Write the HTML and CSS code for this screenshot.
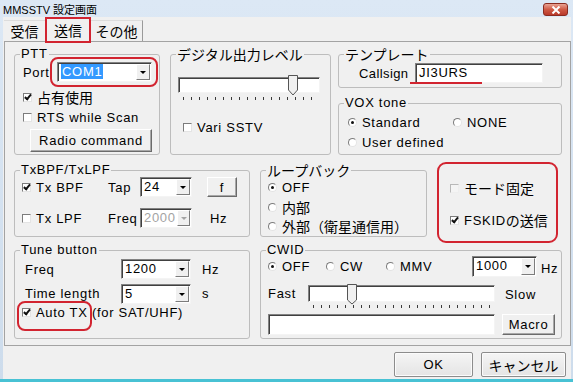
FILE: index.html
```html
<!DOCTYPE html>
<html>
<head>
  <meta charset="utf-8">
  <title>MMSSTV 設定画面</title>

  <!-- ESTILO -->
  <link rel="stylesheet" href="styles.css">
</head>
<body>
  <div class="window">
    <!-- BARRA DE TITULO -->
    <div class="titlebar">
      <span class="title">MMSSTV 設定画面</span>
      <span class="close-btn">
        <svg width="10" height="8" viewBox="0 0 10 8"><path d="M1.5 0.5 L8.5 7.5 M8.5 0.5 L1.5 7.5" stroke="#fff" stroke-width="2"/></svg>
      </span>
    </div>

    <div class="client">
      <!-- PESTAÑAS -->
      <div class="tabs">
        <div class="tab t1">受信</div>
        <div class="tab active">送信</div>
        <div class="tab t3">その他</div>
      </div>

      <div class="panel">
        <!-- FILA 1 -->
        <div class="row row1">
          <fieldset class="grp g-ptt">
            <legend>PTT</legend>
            <div class="body">
              <div class="line port-line">
                <span class="lbl-port">Port</span>
                <div class="combo c-port"><span class="val"><span class="sel">COM1</span></span><span class="drop"></span></div>
                <span class="mark mark-port"></span>
              </div>
              <div class="check first"><span class="box on"></span><span class="jp">占有使用</span></div>
              <div class="check"><span class="box"></span>RTS while Scan</div>
              <button class="btn btn-radio">Radio command</button>
            </div>
          </fieldset>

          <fieldset class="grp g-digi">
            <legend class="jp">デジタル出力レベル</legend>
            <div class="body">
              <div class="track t-digi">
                <svg class="thumb th-digi" width="10" height="21" viewBox="0 0 10 21"><polygon points="0.5,0.5 9.5,0.5 9.5,15 5,20 0.5,15" fill="#f0f0f0" stroke="#555"/></svg>
              </div>
              <div class="ticks tk-digi"></div>
              <div class="check vari"><span class="box"></span>Vari SSTV</div>
            </div>
          </fieldset>

          <div class="col-right">
            <fieldset class="grp g-tpl">
              <legend class="jp">テンプレート</legend>
              <div class="body">
                <div class="line call-line">
                  <span class="lbl-call">Callsign</span>
                  <div class="edit e-call">JI3URS</div>
                  <span class="mark mark-call"></span>
                </div>
              </div>
            </fieldset>
            <fieldset class="grp g-vox">
              <legend>VOX tone</legend>
              <div class="body vox-grid">
                <div class="opt"><span class="radio on"></span>Standard</div>
                <div class="opt"><span class="radio"></span>NONE</div>
                <div class="opt"><span class="radio"></span>User defined</div>
              </div>
            </fieldset>
          </div>
        </div>

        <!-- FILA 2 -->
        <div class="row row2">
          <fieldset class="grp g-bpf">
            <legend>TxBPF/TxLPF</legend>
            <div class="body bpf-grid">
              <div class="check"><span class="box on"></span>Tx BPF</div>
              <span>Tap</span>
              <div class="combo c-small"><span class="val">24</span><span class="drop"></span></div>
              <button class="btn btn-f">f</button>

              <div class="check"><span class="box"></span>Tx LPF</div>
              <span>Freq</span>
              <div class="combo c-small disabled"><span class="val">2000</span><span class="drop"></span></div>
              <span class="unit-hz">Hz</span>
            </div>
          </fieldset>

          <fieldset class="grp g-loop">
            <legend class="jp">ループバック</legend>
            <div class="body">
              <div class="opt r1"><span class="radio on"></span>OFF</div>
              <div class="opt r2"><span class="radio"></span><span class="jp">内部</span></div>
              <div class="opt r3"><span class="radio"></span><span class="jp">外部（衛星通信用）</span></div>
            </div>
          </fieldset>

          <div class="mode-box">
            <div class="check"><span class="box dis"></span><span class="jp">モード固定</span></div>
            <div class="check second"><span class="box on"></span>FSKID<span class="jp">の送信</span></div>
          </div>
        </div>

        <!-- FILA 3 -->
        <div class="row row3">
          <fieldset class="grp g-tune">
            <legend>Tune button</legend>
            <div class="body tune-grid">
              <span>Freq</span>
              <div class="combo c-tune"><span class="val">1200</span><span class="drop"></span></div>
              <span class="unit">Hz</span>

              <span class="tl">Time length</span>
              <div class="combo c-tune tl"><span class="val">5</span><span class="drop"></span></div>
              <span class="unit tl">s</span>

              <div class="check auto">
                <span class="box on"></span>Auto TX (for SAT/UHF)
                <span class="mark mark-auto"></span>
              </div>
            </div>
          </fieldset>

          <fieldset class="grp g-cwid">
            <legend>CWID</legend>
            <div class="body">
              <div class="cw-line">
                <div class="opt w-off"><span class="radio on"></span>OFF</div>
                <div class="opt w-cw"><span class="radio"></span>CW</div>
                <div class="opt w-mmv"><span class="radio"></span>MMV</div>
                <div class="combo c-cw"><span class="val">1000</span><span class="drop"></span></div>
                <span class="hz-cw">Hz</span>
              </div>
              <div class="speed-line">
                <span class="lbl-fast">Fast</span>
                <div class="slider-wrap">
                  <div class="track t-cw">
                    <svg class="thumb th-cw" width="10" height="21" viewBox="0 0 10 21"><polygon points="0.5,0.5 9.5,0.5 9.5,16 5,20 0.5,16" fill="#f0f0f0" stroke="#555"/></svg>
                  </div>
                  <div class="ticks tk-cw"></div>
                </div>
                <span class="lbl-slow">Slow</span>
              </div>
              <div class="macro-line">
                <div class="edit e-macro"></div>
                <button class="btn btn-macro">Macro</button>
              </div>
            </div>
          </fieldset>
        </div>
      </div>

      <!-- BOTONES -->
      <div class="footer">
        <button class="btn btn-main">OK</button>
        <button class="btn btn-main btn-cancel"><span class="jp">キャンセル</span></button>
      </div>
    </div>
  </div>
</body>
</html>
```

FILE: styles.css
```css
body {
  margin: 0;
  font-family: "Liberation Sans", "Noto Sans CJK JP", sans-serif;
  font-size: 13px;
  letter-spacing: 0.7px;
  color: #000;
  background-color: #fff;
}
.jp {
  font-family: "Noto Sans CJK JP", sans-serif;
  font-size: 14px;
  letter-spacing: 0;
}
.window {
  width: 573px;
  height: 382px;
  box-sizing: border-box;
  padding: 0 2px 0 3px;
  background: linear-gradient(#dce8f5, #cddcec);
  border-bottom: 3px solid #48c2d4;
  display: flex;
  flex-direction: column;
}
.titlebar {
  height: 17px;
  display: flex;
  align-items: center;
  justify-content: space-between;
}
.title {
  font-size: 11px;
  letter-spacing: 0;
  margin-top: 1px;
}
.close-btn {
  width: 25px;
  height: 13px;
  margin-right: 3px;
  margin-top: 2px;
  box-sizing: border-box;
  border: 1px solid #8a2b20;
  border-radius: 3px;
  background: linear-gradient(#e9a394, #cf5a45 50%, #b9392a);
  display: flex;
  align-items: center;
  justify-content: center;
}
.client {
  flex: 1;
  background-color: #f0f0f0;
  padding-left: 1px;
}

/* pestañas */
.tabs {
  height: 24px;
  display: flex;
  align-items: flex-end;
}
.tab {
  height: 21px;
  box-sizing: border-box;
  text-align: center;
  line-height: 20px;
  font-family: "Noto Sans CJK JP", sans-serif;
  font-size: 14px;
  letter-spacing: 0;
  border-top: 1px solid #dcdcdc;
  border-right: 1px solid #9a9a9a;
}
.tab.t1 {
  width: 41px;
  border-right: none;
}
.tab.t3 {
  width: 52px;
}
.tab.active {
  width: 46px;
  height: 26px;
  line-height: 23px;
  margin-bottom: -2px;
  border: 2px solid #d22430;
  background-color: #f0f0f0;
  position: relative;
  z-index: 1;
}

.panel {
  height: 305px;
  box-sizing: border-box;
  border: 1px solid #a3a3a3;
  padding: 5px 0 0 9px;
}
.row {
  display: flex;
  align-items: flex-start;
}
.row2 {
  margin-top: 8px;
}
.row3 {
  margin-top: 6px;
}

/* group box */
.grp {
  margin: 0;
  padding: 0;
  min-width: 0;
  box-sizing: border-box;
  border: 1px solid #bdbdbd;
  border-radius: 3px;
}
.grp legend {
  margin-left: 5px;
  padding: 0 1px;
  line-height: 14px;
}
.g-ptt {
  width: 146px;
  height: 108px;
}
.g-digi {
  width: 161px;
  height: 108px;
  margin-left: 10px;
}
.col-right {
  width: 224px;
  margin-left: 7px;
}
.g-tpl {
  height: 41px;
}
.g-vox {
  height: 59px;
  margin-top: 8px;
}
.g-bpf {
  width: 236px;
  height: 74px;
}
.g-loop {
  width: 167px;
  height: 74px;
  margin-left: 10px;
}
.g-tune {
  width: 236px;
  height: 96px;
}
.g-cwid {
  width: 302px;
  height: 96px;
  margin-left: 10px;
}

/* controles */
.line {
  display: flex;
  align-items: center;
  position: relative;
}
.check, .opt {
  display: flex;
  align-items: center;
  height: 20px;
  white-space: nowrap;
}
.box {
  width: 9px;
  height: 9px;
  box-sizing: border-box;
  border: 1px solid;
  border-color: #7c7c7c #e4e4e4 #e4e4e4 #7c7c7c;
  background-color: #fff;
  margin-right: 5px;
  position: relative;
  flex: none;
}
.box.on::after {
  content: "";
  position: absolute;
  left: 2px;
  top: -1px;
  width: 2px;
  height: 5px;
  border: solid #111;
  border-width: 0 2px 2px 0;
  transform: rotate(40deg);
}
.box.dis {
  border-color: #b8b8b8 #eeeeee #eeeeee #b8b8b8;
  background-color: #f4f4f4;
}
.radio {
  width: 9px;
  height: 9px;
  box-sizing: border-box;
  border-radius: 50%;
  border: 1px solid;
  border-color: #7c7c7c #e4e4e4 #e4e4e4 #7c7c7c;
  background-color: #fff;
  margin-right: 5px;
  position: relative;
  flex: none;
}
.radio.on::after {
  content: "";
  position: absolute;
  left: 2px;
  top: 2px;
  width: 3px;
  height: 3px;
  border-radius: 50%;
  background-color: #111;
}
.combo {
  display: flex;
  height: 20px;
  box-sizing: border-box;
  border: 1px solid;
  border-color: #828282 #f4f4f4 #f4f4f4 #828282;
  box-shadow: inset 1px 1px 0 #404040;
  background-color: #fff;
}
.combo .val {
  flex: 1;
  padding: 1px 0 0 3px;
  line-height: 16px;
}
.combo .sel {
  background-color: #3399ff;
  color: #fff;
  padding: 0 1px;
}
.combo .drop {
  width: 14px;
  margin: 1px;
  box-sizing: border-box;
  border: 1px solid;
  border-color: #fff #7c7c7c #7c7c7c #fff;
  background-color: #f0f0f0;
  position: relative;
}
.combo .drop::after {
  content: "";
  position: absolute;
  left: 3px;
  top: 6px;
  border-left: 3px solid transparent;
  border-right: 3px solid transparent;
  border-top: 3px solid #000;
}
.combo.disabled .val {
  color: #a3a3a3;
}
.combo.disabled .drop::after {
  border-top-color: #a3a3a3;
}
.edit {
  height: 20px;
  box-sizing: border-box;
  border: 1px solid;
  border-color: #828282 #f4f4f4 #f4f4f4 #828282;
  box-shadow: inset 1px 1px 0 #404040;
  background-color: #fff;
  padding: 1px 0 0 3px;
  line-height: 16px;
}
.btn {
  font: inherit;
  letter-spacing: inherit;
  color: #000;
  padding: 0;
  box-sizing: border-box;
  border: 1px solid;
  border-color: #fff #6b6b6b #6b6b6b #fff;
  box-shadow: inset -1px -1px 0 #a8a8a8;
  background-color: #f0f0f0;
}
.track {
  height: 16px;
  box-sizing: border-box;
  border: 1px solid;
  border-color: #828282 #f4f4f4 #f4f4f4 #828282;
  box-shadow: inset 1px 1px 0 #404040;
  background-color: #fff;
  position: relative;
}
.thumb {
  position: absolute;
  top: -3px;
}
.ticks {
  height: 3px;
  background: repeating-linear-gradient(to right, #3a3a3a 0 1px, transparent 1px 8px);
}
.mark {
  position: absolute;
  box-sizing: border-box;
  border: 2px solid #d22430;
}

/* PTT */
.g-ptt .body {
  padding: 1px 0 0 8px;
}
.port-line {
  height: 20px;
}
.lbl-port {
  width: 34px;
}
.c-port {
  width: 95px;
}
.mark-port {
  left: 27px;
  top: -5px;
  width: 108px;
  height: 30px;
  border-radius: 8px;
}
.g-ptt .check.first {
  margin-top: 5px;
}
.btn-radio {
  width: 122px;
  height: 23px;
  margin: 2px 0 0 7px;
}

/* salida digital */
.g-digi .body {
  padding: 16px 0 0 7px;
}
.t-digi {
  width: 142px;
}
.th-digi {
  left: 109px;
}
.tk-digi {
  width: 135px;
  margin: 4px 0 0 5px;
}
.vari {
  margin: 17px 0 0 5px;
}

/* plantilla */
.g-tpl .body {
  padding: 2px 0 0 20px;
}
.lbl-call {
  width: 56px;
  letter-spacing: 0.4px;
}
.e-call {
  width: 128px;
}
.mark-call {
  left: 51px;
  top: 19px;
  width: 72px;
  height: 2px;
  border-width: 1px;
}
.vox-grid {
  display: grid;
  grid-template-columns: 105px auto;
  padding: 2px 0 0 9px;
}

/* BPF */
.bpf-grid {
  display: grid;
  grid-template-columns: 86px 32px 52px auto;
  grid-template-rows: 20px 20px;
  row-gap: 11px;
  align-items: center;
  padding: 0 0 0 7px;
}
.btn-f {
  width: 30px;
  height: 20px;
  margin-left: 15px;
}
.unit-hz {
  margin-left: 18px;
}

/* loopback */
.g-loop .body {
  padding-left: 7px;
}
.g-loop .r3 {
  height: 18px;
}
.mode-box {
  width: 121px;
  height: 81px;
  box-sizing: border-box;
  margin: -1px 0 -8px 10px;
  padding: 14px 0 0 11px;
  border: 2px solid #d22430;
  border-radius: 9px;
}
.mode-box .second {
  margin-top: 12px;
}

/* tune */
.tune-grid {
  display: grid;
  grid-template-columns: 96px 70px auto;
  grid-template-rows: 20px 20px 20px;
  align-items: center;
  padding: 2px 0 0 10px;
}
.tune-grid .tl {
  margin-top: 9px;
}
.tune-grid .unit {
  margin-left: 11px;
}
.auto {
  grid-column: 1 / 4;
  margin: 6px 0 0 -3px;
  position: relative;
}
.mark-auto {
  left: -5px;
  top: -1px;
  width: 75px;
  height: 30px;
  border-radius: 8px;
}

/* CWID */
.g-cwid .body {
  padding-left: 7px;
}
.cw-line {
  display: flex;
  align-items: center;
  height: 21px;
  margin-top: -1px;
}
.w-off {
  width: 58px;
}
.w-cw {
  width: 60px;
}
.w-mmv {
  width: 86px;
}
.c-cw {
  width: 65px;
  height: 21px;
}
.hz-cw {
  margin-left: 4px;
  margin-top: 4px;
}
.speed-line {
  display: flex;
  align-items: flex-start;
  margin-top: 8px;
}
.lbl-fast {
  width: 40px;
  line-height: 17px;
}
.lbl-slow {
  margin-left: 10px;
  line-height: 20px;
}
.t-cw {
  width: 187px;
  height: 17px;
}
.th-cw {
  left: 38px;
  top: -2px;
}
.tk-cw {
  width: 180px;
  margin: 3px 0 0 5px;
}
.macro-line {
  display: flex;
  margin-top: 6px;
}
.e-macro {
  width: 227px;
  height: 21px;
}
.btn-macro {
  width: 53px;
  height: 21px;
  margin-left: 7px;
}

/* pie */
.footer {
  display: flex;
  justify-content: flex-end;
  margin-top: 6px;
  padding-right: 5px;
}
.btn-main {
  width: 79px;
  height: 25px;
  border: 1px solid #8c8c8c;
  border-radius: 2px;
  box-shadow: inset 0 0 0 1px #fbfbfb;
  background: linear-gradient(#f5f5f5, #e4e4e4);
}
.btn-cancel {
  width: 85px;
  margin-left: 8px;
}
```
